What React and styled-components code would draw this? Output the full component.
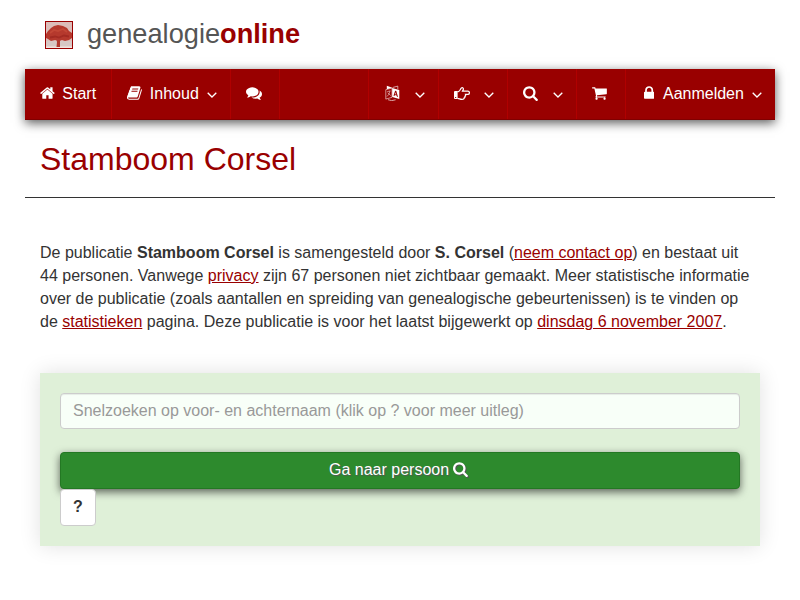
import React from 'react';
import styled, { createGlobalStyle } from 'styled-components';

const Global = createGlobalStyle`
  * { box-sizing: border-box; }
  body {
    margin: 0;
    background: #fff;
    color: #333;
    font: 16px/23px "Liberation Sans", Arial, sans-serif;
  }
`;

const Page = styled.div`
  width: 750px;
  margin: 0 auto;
  padding-bottom: 54px;
`;
const Brand = styled.header`
  display: flex;
  align-items: center;
  height: 69px;
  padding: 1px 0 0 20px;
`;
const BrandName = styled.div`
  margin-left: 14px;
  padding-bottom: 3px;
  font-size: 27.2px;
  line-height: 32px;
  color: #555;
  strong { color: #900; }
`;
const Nav = styled.nav`
  display: flex;
  height: 51px;
  background: #900;
  border-bottom: 1px solid #800000;
  box-shadow: 0 3px 10px rgba(0, 0, 0, 0.65);
`;
const NavItem = styled.a`
  display: flex;
  align-items: center;
  width: ${p => p.$w}px;
  padding: 0 0 1px ${p => p.$pad || 15}px;
  color: #fff;
  border-right: ${p => (p.$last ? 0 : 1)}px solid #b00000;
`;
const NavGap = styled.div`
  flex: 1;
  border-right: 1px solid #b00000;
`;
const Label = styled.span`
  margin-left: ${p => p.$gap || 8}px;
`;
const Icon = styled.svg`
  display: block;
  flex: none;
  height: 16px;
  margin-top: -1px;
  fill: currentColor;
`;
const Chevron = styled.svg`
  display: block;
  flex: none;
  width: 10px;
  height: 6px;
  margin: 2px 0 0 ${p => p.$gap}px;
  fill: none;
  stroke: #fff;
  stroke-width: 1.3;
`;
const Title = styled.h1`
  margin: 0;
  height: 78px;
  padding: 20px 15px 0;
  font-size: 32px;
  font-weight: 400;
  line-height: 38px;
  color: #900;
  border-bottom: 1px solid #333;
`;
const Intro = styled.p`
  margin: 43px 0 0;
  padding: 0 0 0 15px;
  white-space: nowrap;
`;
const Link = styled.a`
  color: #900;
  text-decoration: underline;
`;
const SearchPanel = styled.form`
  margin: 40px 15px 0;
  height: 173px;
  padding: 20px;
  background: #dff0d8;
  box-shadow: 0 0 20px rgba(0, 0, 0, 0.12);
`;
const SearchInput = styled.input`
  display: block;
  width: 100%;
  height: 36px;
  padding: 0 12px 1px;
  font: inherit;
  background: #f8fff8;
  border: 1px solid #ccc;
  border-radius: 4px;
  box-shadow: inset 0 1px 1px rgba(0, 0, 0, 0.075);
  &::placeholder { color: #999; opacity: 1; }
`;
const Submit = styled.button`
  display: flex;
  align-items: center;
  justify-content: center;
  gap: 4px;
  width: 100%;
  height: 37px;
  margin: 23px 0 0;
  padding: 0 3px 2px 0;
  font: inherit;
  color: #fff;
  text-shadow: 1px 1px 1px #555;
  background: #2d8a2d;
  border: 1px solid #237823;
  border-radius: 4px;
  box-shadow: 0 3px 8px rgba(0, 0, 0, 0.6);
  svg { filter: drop-shadow(1px 1px 0.5px #555); margin-top: -1px; }
`;
const Help = styled.button`
  position: relative;
  display: block;
  width: 36px;
  height: 37px;
  padding: 0 0 2px;
  font: bold 16px "Liberation Sans", Arial, sans-serif;
  color: #333;
  background: #fff;
  border: 1px solid #ccc;
  border-radius: 4px;
`;

const glyphs = {
  home: [64, 1664, 'M1472 992v480q0 26-19 45t-45 19h-384v-384h-256v384h-384q-26 0-45-19t-19-45v-480q0-1 .5-3t.5-3l575-474 575 474q1 2 1 6zm223-69l-62 74q-8 9-21 11h-3q-13 0-21-7l-692-577-692 577q-12 8-24 7-13-2-21-11l-62-74q-8-10-7-23.5t11-21.5l719-599q32-26 76-26t76 26l244 204v-195q0-14 9-23t23-9h192q14 0 23 9t9 23v408l219 182q10 8 11 21.5t-7 23.5z'],
  book: [64, 1664, 'M1703 478q40 57 18 129l-275 906q-19 64-76.5 107.5t-122.5 43.5h-923q-77 0-148.5-53.5t-99.5-131.5q-24-67-2-127 0-4 3-27t4-37q1-8-3-21.5t-3-19.5q2-11 8-21t16.5-23.5 16.5-23.5q23-38 45-91.5t30-91.5q3-10 .5-30t-.5-28q3-11 17-28t17-23q21-36 42-92t25-90q1-9-2.5-32t.5-28q4-13 22-30.5t22-22.5q19-26 42.5-84.5t27.5-96.5q1-8-3-25.5t-2-26.5q2-8 9-18t18-23 17-21q8-12 16.5-30.5t15-35 16-36 19.5-32 26.5-23.5 36-11.5 47.5 5.5l-1 3q38-9 51-9h761q74 0 114 56t18 130l-274 906q-36 119-71.5 153.5t-128.5 34.5h-869q-27 0-38 15-11 16-1 43 24 70 144 70h923q29 0 56-15.5t35-41.5l300-987q7-22 5-57 38 15 59 43zm-1064 2q-4 13 2 22.5t20 9.5h608q13 0 25.5-9.5t16.5-22.5l21-64q4-13-2-22.5t-20-9.5h-608q-13 0-25.5 9.5t-16.5 22.5zm-83 256q-4 13 2 22.5t20 9.5h608q13 0 25.5-9.5t16.5-22.5l21-64q4-13-2-22.5t-20-9.5h-608q-13 0-25.5 9.5t-16.5 22.5z'],
  comments: [0, 1792, 'M1408 768q0 139-94 257t-256.5 186.5-353.5 68.5q-86 0-176-16-124 88-278 128-36 9-86 16h-3q-11 0-20.5-8t-11.5-21q-1-3-1-6.5t.5-6.5 2-6l2.5-5 3.5-5.5 4-5 4.5-5 4-4.5q5-6 23-25t26-29.5 22.5-29 25-38.5 20.5-44q-124-72-195-177t-71-224q0-139 94-257t256.5-186.5 353.5-68.5 353.5 68.5 256.5 186.5 94 257zm384 256q0 120-71 224.5t-195 176.5q10 24 20.5 44t25 38.5 22.5 29 26 29.5 23 25q1 1 4 4.5t4.5 5 4 5 3.5 5.5l2.5 5 2 6 .5 6.5-1 6.5q-3 14-13 22t-22 7q-50-7-86-16-154-40-278-128-90 16-176 16-271 0-472-132 58 4 88 4 161 0 309-45t264-129q125-92 192-212t67-254q0-77-23-152 129 71 204 178t75 230z'],
  search: [64, 1664, 'M1216 832q0-185-131.5-316.5t-316.5-131.5-316.5 131.5-131.5 316.5 131.5 316.5 316.5 131.5 316.5-131.5 131.5-316.5zm512 832q0 52-38 90t-90 38q-54 0-90-38l-343-342q-179 124-399 124-143 0-273.5-55.5t-225-150-150-225-55.5-273.5 55.5-273.5 150-225 225-150 273.5-55.5 273.5 55.5 225 150 150 225 55.5 273.5q0 220-124 399l343 343q37 37 37 90z'],
  cart: [64, 1664, 'M704 1536q0 52-38 90t-90 38-90-38-38-90 38-90 90-38 90 38 38 90zm896 0q0 52-38 90t-90 38-90-38-38-90 38-90 90-38 90 38 38 90zm128-1088v512q0 24-16.5 42.5t-40.5 21.5l-1044 122q13 60 13 70 0 16-24 64h920q26 0 45 19t19 45-19 45-45 19h-1024q-26 0-45-19t-19-45q0-11 8-31.5t16-36 21.5-40 15.5-29.5l-177-823h-204q-26 0-45-19t-19-45 19-45 45-19h256q16 0 28.5 6.5t19.5 15.5 13 24.5 8 26 5.5 29.5 4.5 26h1201q26 0 45 19t19 45z'],
  lock: [320, 1152, 'M640 768h512v-192q0-106-75-181t-181-75-181 75-75 181v192zm832 96v576q0 40-28 68t-68 28h-960q-40 0-68-28t-28-68v-576q0-40 28-68t68-28h32v-192q0-184 132-316t316-132 316 132 132 316v192h32q40 0 68 28t28 68z'],
};

function Glyph({ name }) {
  const [x, w, d] = glyphs[name];
  return (
    <Icon viewBox={`${x} 0 ${w} 1792`} width={(w / 1792) * 16}>
      <path d={d} />
    </Icon>
  );
}

const Down = ({ gap }) => (
  <Chevron viewBox="0 0 10 6" $gap={gap}>
    <path d="M.7.7 5 5 9.3.7" />
  </Chevron>
);

const LanguageIcon = () => (
  <Icon viewBox="0 -.5 15 16" width="15">
    <path d="M1.8.3 7.2 2.2 1.8 3.8z" />
    <path d="M7.6 2 12.8.6V3.6" fill="none" stroke="#fff" strokeWidth=".6" />
    <path d="M.8 4.2 7 2.6v9.2L.8 13.6z" fill="none" stroke="#fff" strokeOpacity=".8" strokeWidth=".7" />
    <path d="M2.2 6.2 5.4 5.3M4.9 5.6Q4.2 9.5 2 11M2.7 7.4 5.7 10" fill="none" stroke="#fff" strokeOpacity=".8" strokeWidth=".65" />
    <path fillRule="evenodd" d="M7.2 2.4 14.3 4.6V13.6L7.2 11.6zM10.1 5.2 8.5 10.3 9.5 10.6 9.9 9.4 11.6 9.9 12 11.3 13 11.6 11.3 5.6zM10.6 6.8 11.3 9 10.2 8.7z" />
    <path d="M3 14.2Q6.5 16 10.6 14.3" fill="none" stroke="#fff" strokeOpacity=".8" strokeWidth=".8" />
  </Icon>
);

const HandIcon = () => (
  <Icon viewBox="0 -.9 16 16" width="16">
    <path d="M0 6Q0 5 1 5H3.6V13.1H1Q0 13.1 0 12.1zM1.1 11V12.1H2.2V11z" fillRule="evenodd" />
    <path d="M3.4 5.6H4.5C6 5.2 6.6 2.6 7.4 2 8.2 1.4 9.4 1.9 9.4 3.1 9.4 4.1 8.8 4.6 8.5 5.2H13.9C14.9 5.2 15.4 5.9 15.4 6.8S14.8 8.5 13.9 8.5H11.5Q12 9.8 10.9 10.5 11.2 11.7 10 12.2 10.2 13.5 8 13.5C6 13.5 5.2 12.5 3.4 12.5" fill="none" stroke="#fff" strokeWidth="1.25" />
  </Icon>
);

const TreeLogo = () => (
  <svg width="28" height="28" viewBox="0 0 28 28">
    <rect width="28" height="28" fill="#900" />
    <rect x="1" y="1" width="26" height="26" fill="#dcbdb9" />
    <rect x="1" y="20" width="26" height="6" fill="#d7c8c5" />
    <path d="M1 25.5h26V27H1z" fill="#f3e4df" />
    <path d="M1 17V13l2-3 3-3 3-2 4-1 5 1 4 2 2 3 3 2v5l-3 2-4 1-3-1-3 1-4-1-4 1-3-2z" fill="#b5392d" />
    <path d="M11 17H16L15 20V26H11.5L12 21z" fill="#b23a30" />
    <path d="m5 12 4-3 4 1 5-2 4 3" fill="none" stroke="#c24736" strokeWidth="1.8" />
    <path d="m5 16.5 5-1 4 1 5-2 5 1" fill="none" stroke="#a32b23" strokeWidth="1.8" />
  </svg>
);

export default function App() {
  return (
    <>
      <Global />
      <Page>
        <Brand>
          <TreeLogo />
          <BrandName>genealogie<strong>online</strong></BrandName>
        </Brand>
        <Nav>
          <NavItem $w={87}><Glyph name="home" /><Label $gap={7.5}>Start</Label></NavItem>
          <NavItem $w={119}><Glyph name="book" /><Label>Inhoud</Label><Down gap={8} /></NavItem>
          <NavItem $w={49}><Glyph name="comments" /></NavItem>
          <NavGap />
          <NavItem $w={70} $pad={16}><LanguageIcon /><Down gap={15} /></NavItem>
          <NavItem $w={69}><HandIcon /><Down gap={14} /></NavItem>
          <NavItem $w={69}><Glyph name="search" /><Down gap={15} /></NavItem>
          <NavItem $w={49}><Glyph name="cart" /></NavItem>
          <NavItem $w={149} $pad={18} $last><Glyph name="lock" /><Label $gap={8.7}>Aanmelden</Label><Down gap={8.5} /></NavItem>
        </Nav>
        <Title>Stamboom Corsel</Title>
        <Intro>
          De publicatie <b>Stamboom Corsel</b> is samengesteld door <b>S. Corsel</b> (<Link>neem contact op</Link>) en bestaat uit<br />
          44 personen. Vanwege <Link>privacy</Link> zijn 67 personen niet zichtbaar gemaakt. Meer statistische informatie<br />
          over de publicatie (zoals aantallen en spreiding van genealogische gebeurtenissen) is te vinden op<br />
          de <Link>statistieken</Link> pagina. Deze publicatie is voor het laatst bijgewerkt op <Link>dinsdag 6 november 2007</Link>.
        </Intro>
        <SearchPanel>
          <SearchInput placeholder="Snelzoeken op voor- en achternaam (klik op ? voor meer uitleg)" />
          <Submit type="button">Ga naar persoon <Glyph name="search" /></Submit>
          <Help type="button">?</Help>
        </SearchPanel>
      </Page>
    </>
  );
}
